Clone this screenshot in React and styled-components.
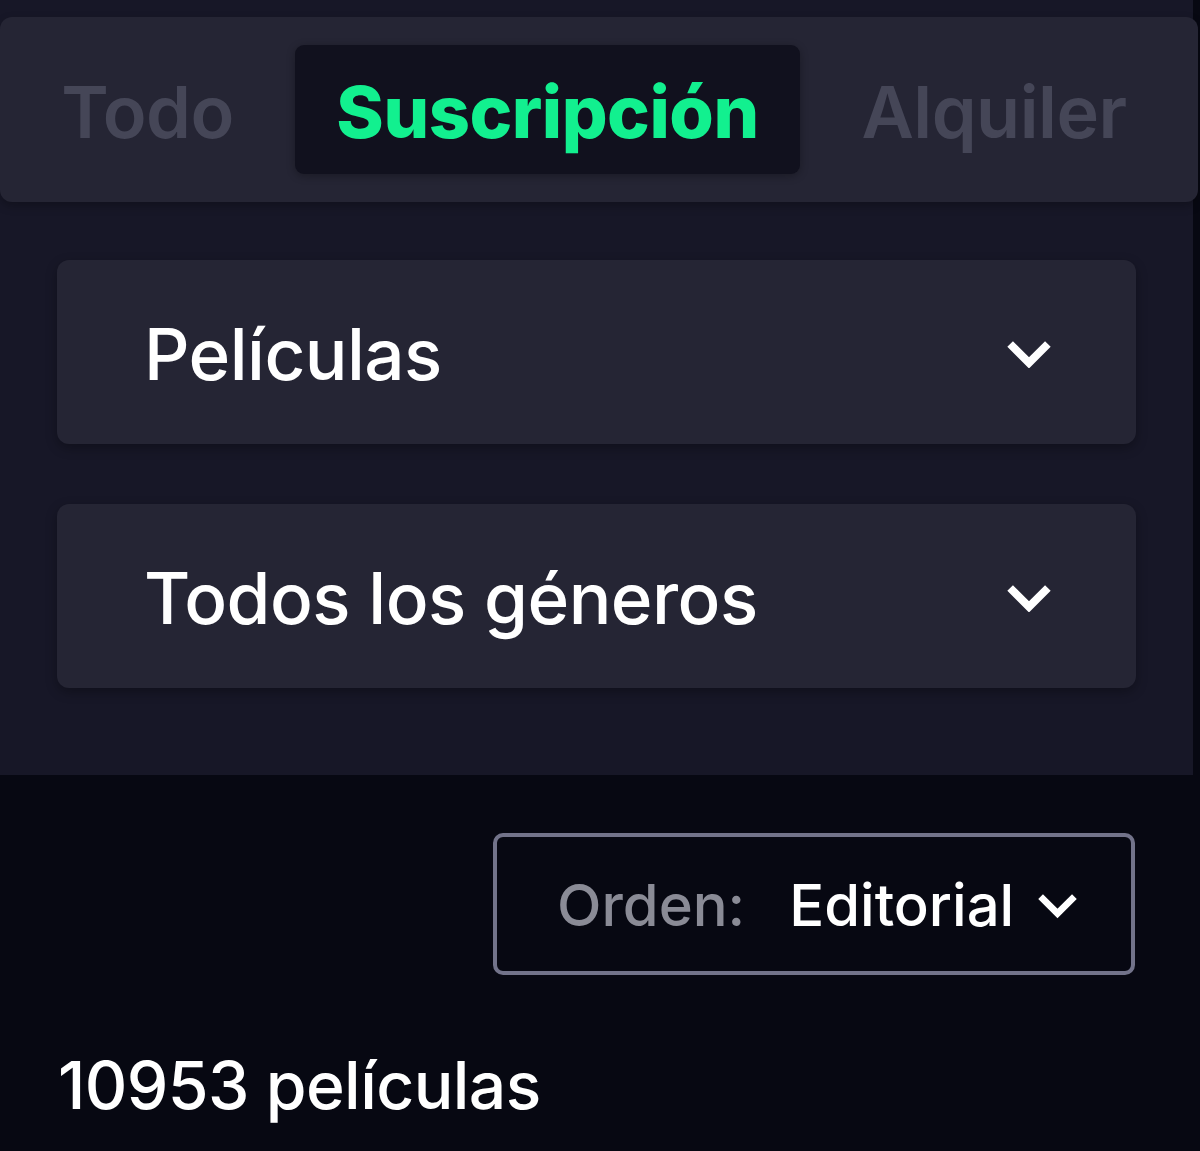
import React from 'react'
import styled, { createGlobalStyle } from 'styled-components'

const GlobalStyle = createGlobalStyle`
  html, body {
    margin: 0;
    padding: 0;
    background: #070812;
  }
  body {
    font-family: Inter, "Noto Sans", "Liberation Sans", sans-serif;
    -webkit-font-smoothing: antialiased;
  }
`

const tabs = [
  { label: 'Todo', width: '295px' },
  { label: 'Suscripción', width: '505px', active: true },
  { label: 'Alquiler', width: 'auto' },
]

const filters = ['Películas', 'Todos los géneros']

const Chevron = ({ size = 48, stroke = 8 }) => (
  <svg width={size} height={size * 0.6} viewBox="0 0 48 29" fill="none">
    <path
      d="M5 4 L24 23 L43 4"
      stroke="#ffffff"
      strokeWidth={stroke}
      strokeLinecap="butt"
      strokeLinejoin="miter"
    />
  </svg>
)

const App = () => {
  return (
    <Page>
      <GlobalStyle />
      <TopSection>
        <TabBar>
          {tabs.map((tab) => (
            <TabCell key={tab.label} $width={tab.width}>
              <Tab $active={tab.active}>{tab.label}</Tab>
            </TabCell>
          ))}
        </TabBar>
        <Filters>
          {filters.map((f) => (
            <Dropdown key={f}>
              <DropdownLabel>{f}</DropdownLabel>
              <Chevron />
            </Dropdown>
          ))}
        </Filters>
      </TopSection>
      <Results>
        <SortRow>
          <SortBox>
            <SortKey>Orden:</SortKey>
            <SortValue>Editorial</SortValue>
            <SortIcon>
              <Chevron size={43} stroke={7.5} />
            </SortIcon>
          </SortBox>
        </SortRow>
        <Count>10953 películas</Count>
      </Results>
    </Page>
  )
}

const Page = styled.div`
  min-height: 1151px;
  background: #070812;
  overflow: hidden;
`
const TopSection = styled.div`
  margin-right: 7px;
  background: #171727;
  padding: 17px 0 87px;
`
const TabBar = styled.div`
  height: 185px;
  margin-right: -5px;
  box-sizing: border-box;
  padding: 28px 0;
  display: flex;
  align-items: stretch;
  background: #252534;
  border-radius: 12px;
  box-shadow: 0 4px 10px rgba(0, 0, 0, 0.25);
`
const TabCell = styled.div`
  width: ${(p) => p.$width};
  flex: ${(p) => (p.$width === 'auto' ? '1' : 'none')};
  display: flex;
  padding-right: ${(p) => (p.$width === 'auto' ? '10px' : '0')};
`
const Tab = styled.div`
  flex: 1;
  display: flex;
  align-items: center;
  justify-content: center;
  border-radius: 9px;
  font-size: 72px;
  line-height: 1;
  letter-spacing: -0.5px;
  font-weight: ${(p) => (p.$active ? 800 : 600)};
  color: ${(p) => (p.$active ? '#12f08f' : '#454657')};
  background: ${(p) => (p.$active ? '#11111e' : 'transparent')};
  box-shadow: ${(p) => (p.$active ? '0 2px 8px rgba(0,0,0,0.3)' : 'none')};
  padding-top: 4px;
`
const Filters = styled.div`
  display: flex;
  flex-direction: column;
  gap: 60px;
  margin: 58px 57px 0;
`
const Dropdown = styled.div`
  height: 184px;
  box-sizing: border-box;
  display: flex;
  align-items: center;
  justify-content: space-between;
  padding: 4px 83px 0 87px;
  background: #252534;
  border-radius: 12px;
  box-shadow: 0 4px 12px rgba(0, 0, 0, 0.3);
`
const DropdownLabel = styled.span`
  font-size: 71px;
  font-weight: 500;
  line-height: 1;
  color: #ffffff;
  letter-spacing: -0.55px;
`
const Results = styled.div`
  padding: 58px 65px 0 58px;
`
const SortRow = styled.div`
  display: flex;
  justify-content: flex-end;
`
const SortBox = styled.div`
  width: 642px;
  height: 142px;
  box-sizing: border-box;
  display: flex;
  align-items: center;
  padding: 2px 0 0 60px;
  border: 4px solid #72738a;
  border-radius: 10px;
`
const SortKey = styled.span`
  font-size: 58px;
  font-weight: 500;
  line-height: 1;
  color: #8a8b96;
`
const SortValue = styled.span`
  margin-left: 44px;
  font-size: 58px;
  font-weight: 500;
  line-height: 1;
  color: #ffffff;
`
const SortIcon = styled.span`
  display: flex;
  margin-left: 22px;
  margin-top: 2px;
`
const Count = styled.div`
  margin-top: 77px;
  font-size: 66px;
  font-weight: 500;
  line-height: 1;
  color: #ffffff;
  letter-spacing: -0.6px;
`

export default App
